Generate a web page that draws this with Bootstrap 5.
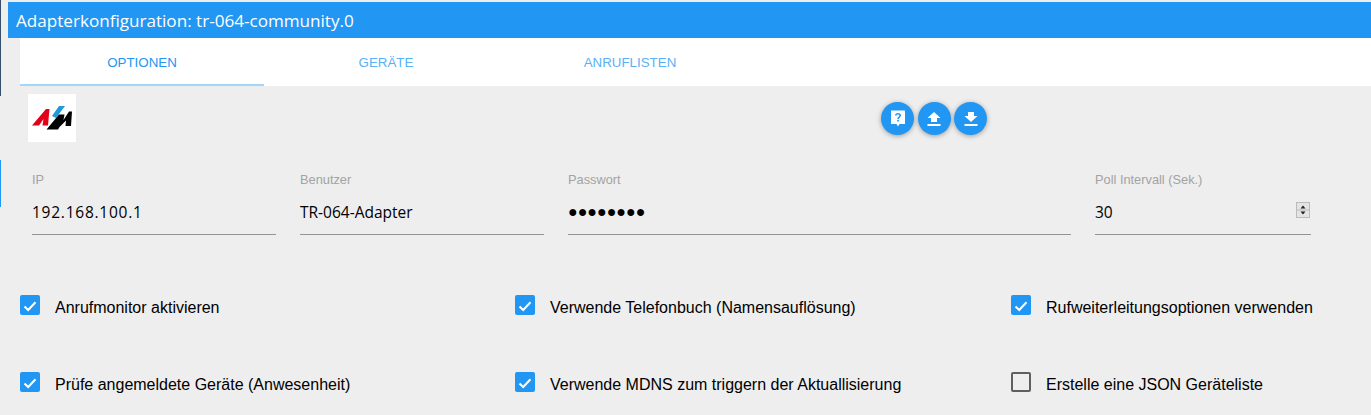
<!DOCTYPE html>
<html lang="en">
<head>
<meta charset="UTF-8">
<meta name="viewport" content="width=device-width, initial-scale=1.0">
<link rel="stylesheet" href="https://cdn.jsdelivr.net/npm/bootstrap@5.3.3/dist/css/bootstrap.min.css">
<script src="https://cdn.jsdelivr.net/npm/bootstrap@5.3.3/dist/js/bootstrap.bundle.min.js"></script>
<title>Adapterkonfiguration</title>
<style>
html, body { height: 415px; overflow: hidden; }
body { background: #eee; font-family: "Liberation Sans", Arial, sans-serif; color: #000; position: relative; }
.edge-strip { position: absolute; left: 0; width: 1px; background: #35506b; }
.edge-strip.blue { background: #2196f3; }
.title-bar { margin: 2px 0 0 8px; height: 36px; background: #2196f3; color: #fff; padding: 0 8px; font-family: "Open Sans", sans-serif; font-size: 17.1px; line-height: 37px; }
.tab-strip { margin-left: 20px; background: #fff; height: 48px; }
.tab-item { width: 244px; height: 48px; line-height: 49px; text-align: center; font-size: 13.33px; color: #2196f3; opacity: .75; }
.tab-item.is-active { opacity: 1; border-bottom: 2px solid #a6d5fa; }
.logo-row { padding: 8px 0 0 28px; height: 56px; }
.logo-box { width: 48px; height: 48px; background: #fff; }
.round-btns { position: absolute; left: 881px; top: 102px; gap: 3.5px; }
.round-btn { width: 33px; height: 33px; padding: 0; border: 0; border-radius: 50%; background: #2196f3; box-shadow: 0 1px 5px rgba(0,0,0,.35); }
.fields { padding: 27px 0 0 32px; gap: 24px; }
.field-box { width: 244px; height: 66px; border-bottom: 1px solid #949494; position: relative; }
.field-box.wide { width: 503px; }
.field-box.poll { width: 216px; }
.field-box label { display: block; font-size: 12.8px; line-height: 14px; color: #a3a3a3; margin-bottom: 15px; padding-top: 4px; }
.field-box .val { font-family: "Open Sans", sans-serif; font-size: 15.5px; line-height: 20px; }
.field-box .val.spaced { letter-spacing: .75px; }
.field-box .dots { font-size: 16px; line-height: 19px; }
.spin-box { position: absolute; right: 1px; top: 33px; width: 14px; height: 16px; background: #e4e4e4; border: 1px solid #bbb; }
.spin-box svg { display: block; }
.check-row { margin-left: 20px; height: 77px; }
.check-row.first { margin-top: 60px; }
.check-row.final { height: 43px; }
.check-cell { width: 495px; gap: 15px; height: 20px; font-size: 16px; line-height: 20px; }
.check-cell.last { width: auto; margin-left: 1px; }
.check-cell > span:last-child { position: relative; top: 3px; }
.tick-box { width: 20px; height: 20px; border-radius: 2px; background: #2196f3; flex: none; }
.tick-box.off { background: transparent; border: 2px solid #5f5f5f; }
</style>
</head>
<body>
<div class="edge-strip" style="top:0;height:96px"></div>
<div class="edge-strip blue" style="top:160px;height:47px"></div>

<div class="title-bar">Adapterkonfiguration: tr-064-community.0</div>

<div class="tab-strip d-flex">
  <div class="tab-item is-active">OPTIONEN</div>
  <div class="tab-item">GERÄTE</div>
  <div class="tab-item">ANRUFLISTEN</div>
</div>

<div class="logo-row">
  <div class="logo-box">
    <svg width="48" height="48" viewBox="0 0 48 48">
      <path d="M4 31.5 L18 15 H21.5 L20 31.5 H14.5 L15.5 25 L11 31.5 Z" fill="#e2001a"/>
      <path d="M24 22 L31 12 H37 L28 24 Z" fill="#1e9ad6"/>
      <path d="M18.5 35.5 L31 20.5 H36.5 L35.5 26 L41 17.5 H44 L43 32 H37.5 L38 26.5 L31.5 33 L30 35.5 Z" fill="#000"/>
    </svg>
  </div>
</div>

<div class="round-btns d-flex">
  <button class="round-btn d-flex align-items-center justify-content-center" type="button" aria-label="Hilfe">
    <svg width="16" height="17" viewBox="0 0 16 17"><path fill="#fff" fill-rule="evenodd" d="M1 0.5 H15 V14 H9.5 L8 16.5 L6.5 14 H1 Z M8 3 C6.2 3 5 4 5 5.6 H6.6 C6.6 4.9 7.2 4.4 8 4.4 C8.8 4.4 9.4 4.9 9.4 5.6 C9.4 6.9 7.3 6.9 7.3 9.2 H8.8 C8.8 7.7 11 7.3 11 5.6 C11 4 9.8 3 8 3 Z M7.2 10 V11.6 H8.9 V10 Z"/></svg>
  </button>
  <button class="round-btn d-flex align-items-center justify-content-center" type="button" aria-label="Hochladen">
    <svg width="14" height="14" viewBox="0 0 14 14"><path fill="#fff" d="M4 10 V6 H0.5 L7 0 L13.5 6 H10 V10 Z M0.5 12 H13.5 V14 H0.5 Z"/></svg>
  </button>
  <button class="round-btn d-flex align-items-center justify-content-center" type="button" aria-label="Herunterladen">
    <svg width="14" height="14" viewBox="0 0 14 14"><path fill="#fff" d="M4 0 V4 H0.5 L7 10 L13.5 4 H10 V0 Z M0.5 12 H13.5 V14 H0.5 Z"/></svg>
  </button>
</div>

<div class="fields d-flex">
  <div class="field-box"><label>IP</label><div class="val spaced">192.168.100.1</div></div>
  <div class="field-box"><label>Benutzer</label><div class="val">TR-064-Adapter</div></div>
  <div class="field-box wide"><label>Passwort</label><div class="dots">●●●●●●●●</div></div>
  <div class="field-box poll"><label>Poll Intervall (Sek.)</label><div class="val">30</div>
    <div class="spin-box">
      <svg width="12" height="14" viewBox="0 0 12 14"><path d="M3.5 5.5 L6 2.5 L8.5 5.5 Z M3.5 8.5 H8.5 L6 11.5 Z" fill="#222"/><path d="M0 7 H12" stroke="#bbb"/></svg>
    </div>
  </div>
</div>

<div class="check-row first d-flex">
  <div class="check-cell d-flex"><span class="tick-box"><svg width="20" height="20" viewBox="0 0 20 20"><path d="M4.5 10.5 L8.2 14 L15.5 6.2" fill="none" stroke="#fff" stroke-width="2"/></svg></span><span>Anrufmonitor aktivieren</span></div>
  <div class="check-cell d-flex"><span class="tick-box"><svg width="20" height="20" viewBox="0 0 20 20"><path d="M4.5 10.5 L8.2 14 L15.5 6.2" fill="none" stroke="#fff" stroke-width="2"/></svg></span><span>Verwende Telefonbuch (Namensauflösung)</span></div>
  <div class="check-cell last d-flex"><span class="tick-box"><svg width="20" height="20" viewBox="0 0 20 20"><path d="M4.5 10.5 L8.2 14 L15.5 6.2" fill="none" stroke="#fff" stroke-width="2"/></svg></span><span>Rufweiterleitungsoptionen verwenden</span></div>
</div>
<div class="check-row final d-flex">
  <div class="check-cell d-flex"><span class="tick-box"><svg width="20" height="20" viewBox="0 0 20 20"><path d="M4.5 10.5 L8.2 14 L15.5 6.2" fill="none" stroke="#fff" stroke-width="2"/></svg></span><span>Prüfe angemeldete Geräte (Anwesenheit)</span></div>
  <div class="check-cell d-flex"><span class="tick-box"><svg width="20" height="20" viewBox="0 0 20 20"><path d="M4.5 10.5 L8.2 14 L15.5 6.2" fill="none" stroke="#fff" stroke-width="2"/></svg></span><span>Verwende MDNS zum triggern der Aktuallisierung</span></div>
  <div class="check-cell last d-flex"><span class="tick-box off"></span><span>Erstelle eine JSON Geräteliste</span></div>
</div>
</body>
</html>
